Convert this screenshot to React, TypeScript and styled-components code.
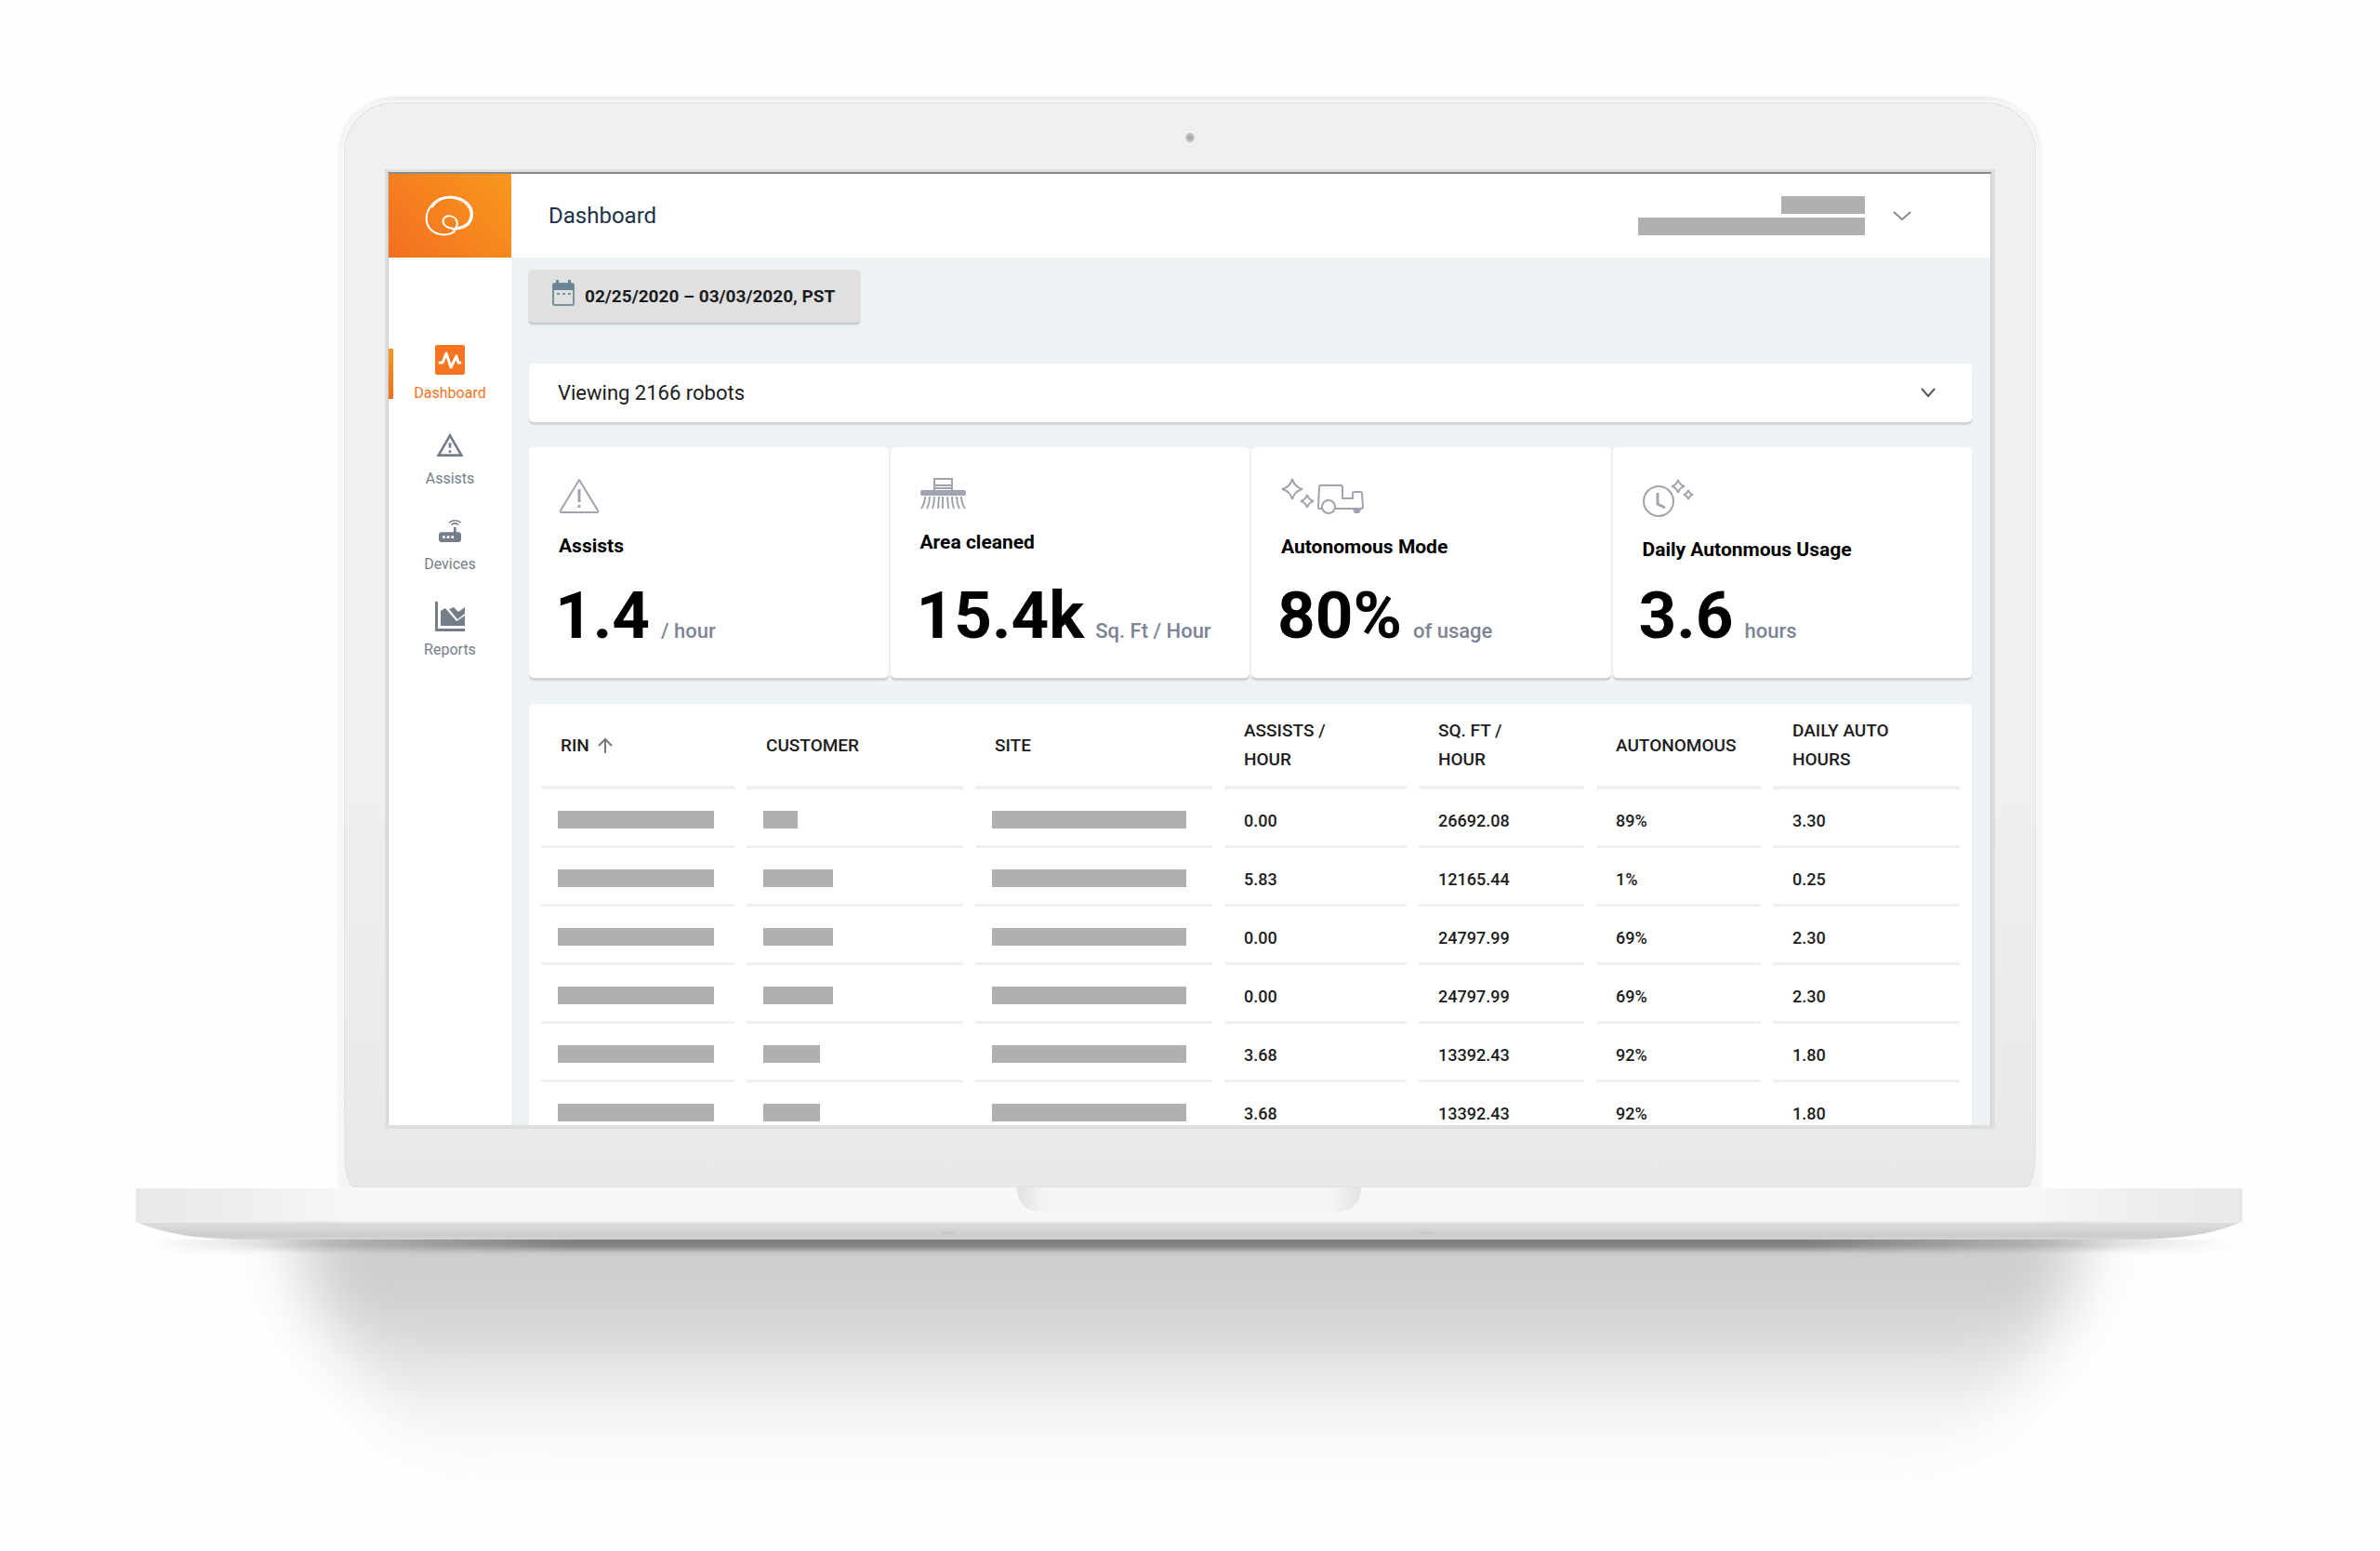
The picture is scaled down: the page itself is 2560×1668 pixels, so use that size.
import React from "react";
import styled, { createGlobalStyle, css } from "styled-components";
import { MdOutlineWarningAmber, MdRouter } from "react-icons/md";

const color = {
  ink: "#1c1c1e",
  navy: "#1b3145",
  black: "#000000",
  muted: "#7d8495",
  nav: "#757d8b",
  iconLine: "#a0a4ae",
  orange: "#f47421",
  canvas: "#edf2f5",
  edge: "#cfd3d5",
  redacted: "#b0b0b0",
  rule: "#f0f0f0",
};

const GlobalStyle = createGlobalStyle`
  *, *::before, *::after { box-sizing: border-box; }
  body {
    margin: 0;
    background: #fefefe;
    font-family: Roboto, "Liberation Sans", sans-serif;
    color: ${color.ink};
  }
  button {
    font: inherit;
    color: inherit;
    border: 0;
    background: none;
    padding: 0;
    cursor: pointer;
  }
  svg { display: block; flex: none; }
`;

/* ---------- laptop ---------- */

const Stage = styled.main`
  display: flex;
  flex-direction: column;
  align-items: center;
  padding-top: 104px;
  overflow: hidden;
`;

const Lid = styled.div`
  width: 72%;
  max-width: 1832px;
  padding: 6px 6px 0;
  border-radius: 60px 60px 0 0;
  background: linear-gradient(#ececec, #f5f5f5 6px);
  box-shadow: 0 0 3px #ececec;
`;

const Bezel = styled.div`
  display: flex;
  flex-direction: column;
  padding: 0 43px 62px;
  border: 1px solid #e0e0e0;
  border-radius: 54px 54px 10px 10px / 54px 54px 40px 40px;
  background: linear-gradient(#f0f0f0 60%, #e8e8e8);
  box-shadow: 0 0 0 1px #fbfbfb;
`;

const CameraBar = styled.div`
  display: grid;
  place-items: center;
  height: 71px;
  padding-top: 2px;
`;

const Camera = styled.span`
  width: 10px;
  height: 10px;
  border-radius: 50%;
  background: radial-gradient(#a8a8a8 20%, #cacaca 70%);
`;

const ScreenFrame = styled.div`
  padding: 3px 4px 4px 3px;
  background: #dddede;
`;

const Screen = styled.div`
  display: grid;
  grid-template-columns: 132px 1fr;
  aspect-ratio: 1725 / 1025;
  overflow: hidden;
  border: solid #c8cbcd;
  border-width: 2px 1px 0;
  border-top-color: #8b8b8b;
  background: ${color.canvas};
`;

const BaseArt = styled.svg`
  width: 100%;
  height: auto;
`;

/* ---------- sidebar ---------- */

const Sidebar = styled.aside`
  display: flex;
  flex-direction: column;
  min-height: 0;
  background: #ffffff;
`;

const LogoLink = styled.a`
  display: grid;
  place-items: center;
  height: 90px;
  background: linear-gradient(50deg, #f36f21, #f8981d);
`;

const NavList = styled.nav`
  display: flex;
  flex-direction: column;
  gap: 30px;
  padding-top: 94px;
`;

const NavLink = styled.a<{ $active?: boolean }>`
  position: relative;
  display: flex;
  flex-direction: column;
  align-items: center;
  gap: 10px;
  font-size: 16px;
  line-height: 20px;
  text-decoration: none;
  color: ${(p) => (p.$active ? color.orange : color.nav)};
  ${(p) =>
    p.$active &&
    css`
      &::before {
        content: "";
        position: absolute;
        left: 0;
        top: 4px;
        bottom: 4px;
        width: 5px;
        background: linear-gradient(#f8981d, #f36f21);
      }
    `}
`;

/* ---------- content ---------- */

const Content = styled.div`
  display: flex;
  flex-direction: column;
  min-width: 0;
  min-height: 0;
`;

const TopBar = styled.header`
  display: flex;
  flex: none;
  align-items: center;
  justify-content: space-between;
  height: 90px;
  padding: 0 85px 0 40px;
  background: #ffffff;
`;

const PageTitle = styled.h1`
  margin: 0;
  font-size: 24px;
  line-height: 32px;
  font-weight: 400;
  color: ${color.navy};
`;

const AccountButton = styled.button`
  display: flex;
  align-items: center;
  gap: 30px;
`;

const AccountLines = styled.span`
  display: flex;
  flex-direction: column;
  align-items: flex-end;
  gap: 4px;
`;

const Redacted = styled.span<{ $width: number }>`
  display: block;
  width: ${(p) => p.$width}px;
  height: 19px;
  background: ${color.redacted};
`;

const Board = styled.div`
  display: flex;
  flex-direction: column;
  flex: 1;
  min-height: 0;
  padding: 13px 20px 0 19px;
`;

const DateButton = styled.button`
  display: flex;
  flex: none;
  align-items: center;
  align-self: flex-start;
  gap: 11px;
  height: 57px;
  margin-bottom: 44px;
  padding: 0 27px 0 25px;
  border-radius: 4px;
  background: #e0e0e0;
  box-shadow: 0 2px 2px #bfc2c4;
  font-size: 19px;
  line-height: 24px;
  font-weight: 700;

  svg {
    margin-bottom: 8px;
  }
`;

const panel = css`
  border-radius: 5px;
  background: #ffffff;
  box-shadow: 0 3px 1px ${color.edge};
`;

const FleetPicker = styled.button`
  ${panel}
  display: flex;
  flex: none;
  align-items: center;
  justify-content: space-between;
  height: 63px;
  margin-bottom: 27px;
  padding: 0 39px 0 31px;
  font-size: 22px;
  line-height: 28px;
  font-weight: 400;
`;

const StatGrid = styled.section`
  display: grid;
  flex: none;
  grid-template-columns: repeat(4, 1fr);
  gap: 2px;
  margin-bottom: 28px;
`;

const StatCard = styled.article`
  ${panel}
  display: flex;
  flex-direction: column;
  height: 248px;
  padding: 33px 0 31px 32px;
`;

const StatLabel = styled.h2`
  margin: 23px 0 0;
  font-size: 21px;
  line-height: 24px;
  font-weight: 700;
  color: ${color.black};
`;

const StatReading = styled.p`
  display: flex;
  align-items: baseline;
  gap: 12px;
  margin: auto 0 0 -4px;
  white-space: nowrap;
`;

const StatValue = styled.strong`
  font-size: 71px;
  line-height: 72px;
  font-weight: 700;
  color: ${color.black};
`;

const StatUnit = styled.span`
  font-size: 22px;
  line-height: 24px;
  font-weight: 500;
  color: ${color.muted};
`;

const TablePanel = styled.section`
  ${panel}
  flex: 1 0 auto;
`;

const Table = styled.table`
  width: 100%;
  table-layout: fixed;
  border-collapse: separate;
  border-spacing: 13px 0;
  text-align: left;
  font-weight: 500;
`;

const Column = styled.col<{ $width: number }>`
  width: ${(p) => p.$width}px;
`;

const HeadCell = styled.th`
  height: 92px;
  padding: 0 20px 0 21px;
  border-bottom: 4px solid ${color.rule};
  font-size: 19px;
  line-height: 31px;
  font-weight: 500;
`;

const SortButton = styled.button`
  display: flex;
  align-items: center;
  gap: 9px;
`;

const Cell = styled.td`
  height: 63px;
  padding: 5px 0 0 18px;
  border-bottom: 3px solid ${color.rule};
  font-size: 18px;
  line-height: 24px;
`;

const ValueCell = styled(Cell)`
  padding: 7px 0 0 21px;
`;

/* ---------- drawings ---------- */

const LogoMark = () => (
  <svg width="54" height="46" viewBox="0 0 54 46" fill="none" stroke="#fff" strokeLinecap="round">
    <path
      d="M32 40 C23 46 8 44 3 33 C-2 19 9 3 27 3 C42 3 52 12 51 23 C50 34 40 38 31 37 C23 36 18 32 20 27 C22 22 31 22 34 28 C36 32 34 36 31 39"
      strokeWidth="2"
    />
    <path d="M8 13 C12 6 19 3 28 3 C42 4 51 13 50 23 C49 32 41 36 33 37" strokeWidth="3" />
  </svg>
);

const PulseIcon = () => (
  <svg width="32" height="32" viewBox="0 0 32 32" fill="none">
    <rect width="32" height="32" rx="2" fill={color.orange} />
    <path
      d="M5 19h3l4-10 5 15 6-12 2 7h2"
      stroke="#fff"
      strokeWidth="3"
      strokeLinecap="round"
      strokeLinejoin="round"
    />
  </svg>
);

const ReportsIcon = () => (
  <svg width="32" height="32" viewBox="0 0 32 32" fill="currentColor">
    <path d="M0 0h3v29h29v3H0z" />
    <path d="M6 26V10l5-3 12 14 9-6v11z" />
    <path d="M15 8l5-2 5 5 7-5v7l-8 6z" />
  </svg>
);

const CalendarIcon = () => (
  <svg width="24" height="28" viewBox="0 0 24 28" fill="none">
    <rect x="1" y="4" width="22" height="23" rx="2" stroke="#78909c" strokeWidth="2" />
    <path d="M1 4h22v7H1z" fill="#6b8594" />
    <path d="M4 0h3v5H4zM17 0h3v5h-3z" fill="#6b8594" />
    <path d="M5 14h3v2H5zM11 14h3v2h-3zM17 14h3v2h-3z" fill="#78909c" />
  </svg>
);

const Chevron = ({ width, stroke }: { width: number; stroke: string }) => (
  <svg width={width} height="11" viewBox={`0 0 ${width} 11`} fill="none">
    <path d={`M1 1L${width / 2} 9L${width - 1} 1`} stroke={stroke} strokeWidth="2" />
  </svg>
);

const ArrowUp = () => (
  <svg width="16" height="17" viewBox="0 0 16 17" fill="none" stroke="#777" strokeWidth="2">
    <path d="M8 17V2M1 9l7-7 7 7" />
  </svg>
);

const AlertIcon = () => (
  <svg width="44" height="38" viewBox="0 0 44 38" fill="none" stroke={color.iconLine} strokeWidth="2">
    <path d="M22 2L42 35Q43 37 41 37H3Q1 37 2 35Z" strokeLinejoin="round" />
    <path d="M22 12v14M22 29v3" strokeWidth="3" />
  </svg>
);

const BrushIcon = () => (
  <svg width="49" height="34" viewBox="0 0 49 34" fill="none" stroke={color.iconLine} strokeWidth="2">
    <path d="M15 14V1h19v13M15 8h19M15 11h19" />
    <rect x="1" y="14" width="47" height="4" rx="1" fill={color.iconLine} />
    <path d="M5 20q0 7-4 13M10 20q0 7-3 13M15 20q0 7-2 13M20 20l-1 13M24 20v13M29 20l1 13M34 20q0 7 2 13M39 20q0 7 3 13M44 20q0 7 4 13" />
  </svg>
);

const star = (x: number, y: number, r: number) =>
  `M${x} ${y - r}Q${x + r * 0.2} ${y - r * 0.2} ${x + r} ${y}Q${x + r * 0.2} ${y + r * 0.2} ${x} ${y + r}Q${x - r * 0.2} ${y + r * 0.2} ${x - r} ${y}Q${x - r * 0.2} ${y - r * 0.2} ${x} ${y - r}Z`;

const RobotIcon = () => (
  <svg width="90" height="39" viewBox="0 0 90 39" fill="none" stroke={color.iconLine} strokeWidth="2">
    <path d={star(12, 12, 11)} />
    <path d={star(28, 25, 7)} />
    <path
      d="M44 33H41Q40 33 40 31L41 10Q41 8 43 8H64Q66 8 66 10V22H77V17Q77 15 79 15H85Q87 15 87 17L88 31Q88 33 86 33H58"
      strokeLinejoin="round"
    />
    <circle cx="51" cy="31" r="7" />
    <path d="M77 34h9l-2 4h-5z" fill={color.iconLine} stroke="none" />
  </svg>
);

const ClockIcon = () => (
  <svg width="56" height="42" viewBox="0 0 56 42" fill="none" stroke={color.iconLine} strokeWidth="2">
    <circle cx="17" cy="25" r="16" />
    <path d="M16 16v12l8 4" strokeWidth="3" />
    <path d={star(38, 9, 7)} />
    <path d={star(49, 18, 5)} />
  </svg>
);

const LaptopBase = () => (
  <BaseArt viewBox="0 1277 2560 391" aria-hidden="true">
    <defs>
      <linearGradient id="front" x1="0" x2="1">
        <stop offset="0" stopColor="#e8e8e8" />
        <stop offset=".05" stopColor="#eeeeee" />
        <stop offset=".1" stopColor="#f7f7f7" />
        <stop offset=".9" stopColor="#f7f7f7" />
        <stop offset=".95" stopColor="#eeeeee" />
        <stop offset="1" stopColor="#e8e8e8" />
      </linearGradient>
      <linearGradient id="under" x2="0" y2="1">
        <stop offset="0" stopColor="#dedede" />
        <stop offset=".8" stopColor="#cccccc" />
        <stop offset="1" stopColor="#d6d6d6" />
      </linearGradient>
      <linearGradient id="contact" x1="0" x2="1">
        <stop offset="0" stopColor="#808080" stopOpacity="0" />
        <stop offset=".1" stopColor="#808080" stopOpacity=".4" />
        <stop offset=".2" stopColor="#808080" />
        <stop offset=".8" stopColor="#808080" />
        <stop offset=".9" stopColor="#808080" stopOpacity=".4" />
        <stop offset="1" stopColor="#808080" stopOpacity="0" />
      </linearGradient>
      <linearGradient id="cast" gradientUnits="userSpaceOnUse" x1="0" y1="1340" x2="0" y2="1600">
        <stop offset="0" stopColor="#cfcfcf" />
        <stop offset=".12" stopColor="#cccccc" />
        <stop offset=".25" stopColor="#d0d0d0" />
        <stop offset=".4" stopColor="#dcdcdc" />
        <stop offset=".6" stopColor="#ededed" />
        <stop offset=".75" stopColor="#f9f9f9" />
        <stop offset="1" stopColor="#fefefe" />
      </linearGradient>
      <linearGradient id="notch" x1="0" x2="1">
        <stop offset="0" stopColor="#e2e2e2" />
        <stop offset=".08" stopColor="#f4f4f4" />
        <stop offset=".92" stopColor="#f4f4f4" />
        <stop offset="1" stopColor="#e2e2e2" />
      </linearGradient>
      <filter id="soft" x="-10%" y="-40%" width="120%" height="180%">
        <feGaussianBlur stdDeviation="34" />
      </filter>
      <filter id="thin" x="-2%" y="-60%" width="104%" height="220%">
        <feGaussianBlur stdDeviation="3" />
      </filter>
      <clipPath id="below">
        <rect x="0" y="1333" width="2560" height="335" />
      </clipPath>
    </defs>
    <g clipPath="url(#below)">
      <path
        d="M320 1200H2240V1340Q2225 1400 2190 1450Q2130 1540 2040 1640H520Q430 1540 370 1450Q335 1400 320 1340Z"
        fill="url(#cast)"
        filter="url(#soft)"
      />
      <rect x="160" y="1326" width="2240" height="18" fill="url(#contact)" filter="url(#thin)" />
    </g>
    <path d="M146 1314Q190 1333 262 1333H2296Q2368 1333 2412 1314Z" fill="url(#under)" />
    <rect x="146" y="1278" width="2266" height="37" fill="url(#front)" />
    <rect x="146" y="1313" width="2266" height="2" fill="#ebebeb" />
    <path d="M1094 1277H1464Q1464 1304 1434 1304H1124Q1094 1304 1094 1277Z" fill="url(#notch)" />
    <path d="M1010 1327l6-2 8 0 6 2zM1524 1327l6-2 8 0 6 2z" fill="#c4c4c4" />
  </BaseArt>
);

/* ---------- data ---------- */

const navItems = [
  { label: "Dashboard", icon: <PulseIcon />, active: true },
  { label: "Assists", icon: <MdOutlineWarningAmber size={32} /> },
  { label: "Devices", icon: <MdRouter size={32} /> },
  { label: "Reports", icon: <ReportsIcon /> },
];

const stats = [
  { label: "Assists", value: "1.4", unit: "/ hour", icon: <AlertIcon /> },
  { label: "Area cleaned", value: "15.4k", unit: "Sq. Ft / Hour", icon: <BrushIcon /> },
  { label: "Autonomous Mode", value: "80%", unit: "of usage", icon: <RobotIcon /> },
  { label: "Daily Autonmous Usage", value: "3.6", unit: "hours", icon: <ClockIcon /> },
];

const columnWidths = [208, 233, 255, 196, 178, 177, 201];

const rows = [
  { customer: 37, values: ["0.00", "26692.08", "89%", "3.30"] },
  { customer: 75, values: ["5.83", "12165.44", "1%", "0.25"] },
  { customer: 75, values: ["0.00", "24797.99", "69%", "2.30"] },
  { customer: 75, values: ["0.00", "24797.99", "69%", "2.30"] },
  { customer: 61, values: ["3.68", "13392.43", "92%", "1.80"] },
  { customer: 61, values: ["3.68", "13392.43", "92%", "1.80"] },
];

export default function App() {
  return (
    <Stage>
      <GlobalStyle />
      <Lid>
        <Bezel>
          <CameraBar>
            <Camera />
          </CameraBar>
          <ScreenFrame>
            <Screen>
              <Sidebar>
                <LogoLink href="#" aria-label="Home">
                  <LogoMark />
                </LogoLink>
                <NavList>
                  {navItems.map((item) => (
                    <NavLink key={item.label} href="#" $active={item.active}>
                      {item.icon}
                      {item.label}
                    </NavLink>
                  ))}
                </NavList>
              </Sidebar>
              <Content>
                <TopBar>
                  <PageTitle>Dashboard</PageTitle>
                  <AccountButton aria-label="Account">
                    <AccountLines>
                      <Redacted $width={90} />
                      <Redacted $width={244} />
                    </AccountLines>
                    <Chevron width={20} stroke="#858a90" />
                  </AccountButton>
                </TopBar>
                <Board>
                  <DateButton>
                    <CalendarIcon />
                    02/25/2020 – 03/03/2020, PST
                  </DateButton>
                  <FleetPicker>
                    Viewing 2166 robots
                    <Chevron width={16} stroke="#55585c" />
                  </FleetPicker>
                  <StatGrid>
                    {stats.map((s) => (
                      <StatCard key={s.label}>
                        {s.icon}
                        <StatLabel>{s.label}</StatLabel>
                        <StatReading>
                          <StatValue>{s.value}</StatValue>
                          <StatUnit>{s.unit}</StatUnit>
                        </StatReading>
                      </StatCard>
                    ))}
                  </StatGrid>
                  <TablePanel>
                    <Table>
                      <colgroup>
                        {columnWidths.map((w, i) => (
                          <Column key={i} $width={w} />
                        ))}
                      </colgroup>
                      <thead>
                        <tr>
                          <HeadCell aria-sort="ascending">
                            <SortButton>
                              RIN <ArrowUp />
                            </SortButton>
                          </HeadCell>
                          <HeadCell>CUSTOMER</HeadCell>
                          <HeadCell>SITE</HeadCell>
                          <HeadCell>
                            ASSISTS /<br />
                            HOUR
                          </HeadCell>
                          <HeadCell>
                            SQ. FT /<br />
                            HOUR
                          </HeadCell>
                          <HeadCell>AUTONOMOUS</HeadCell>
                          <HeadCell>
                            DAILY AUTO
                            <br />
                            HOURS
                          </HeadCell>
                        </tr>
                      </thead>
                      <tbody>
                        {rows.map((row, i) => (
                          <tr key={i}>
                            <Cell>
                              <Redacted $width={168} />
                            </Cell>
                            <Cell>
                              <Redacted $width={row.customer} />
                            </Cell>
                            <Cell>
                              <Redacted $width={209} />
                            </Cell>
                            {row.values.map((v, j) => (
                              <ValueCell key={j}>{v}</ValueCell>
                            ))}
                          </tr>
                        ))}
                      </tbody>
                    </Table>
                  </TablePanel>
                </Board>
              </Content>
            </Screen>
          </ScreenFrame>
        </Bezel>
      </Lid>
      <LaptopBase />
    </Stage>
  );
}
